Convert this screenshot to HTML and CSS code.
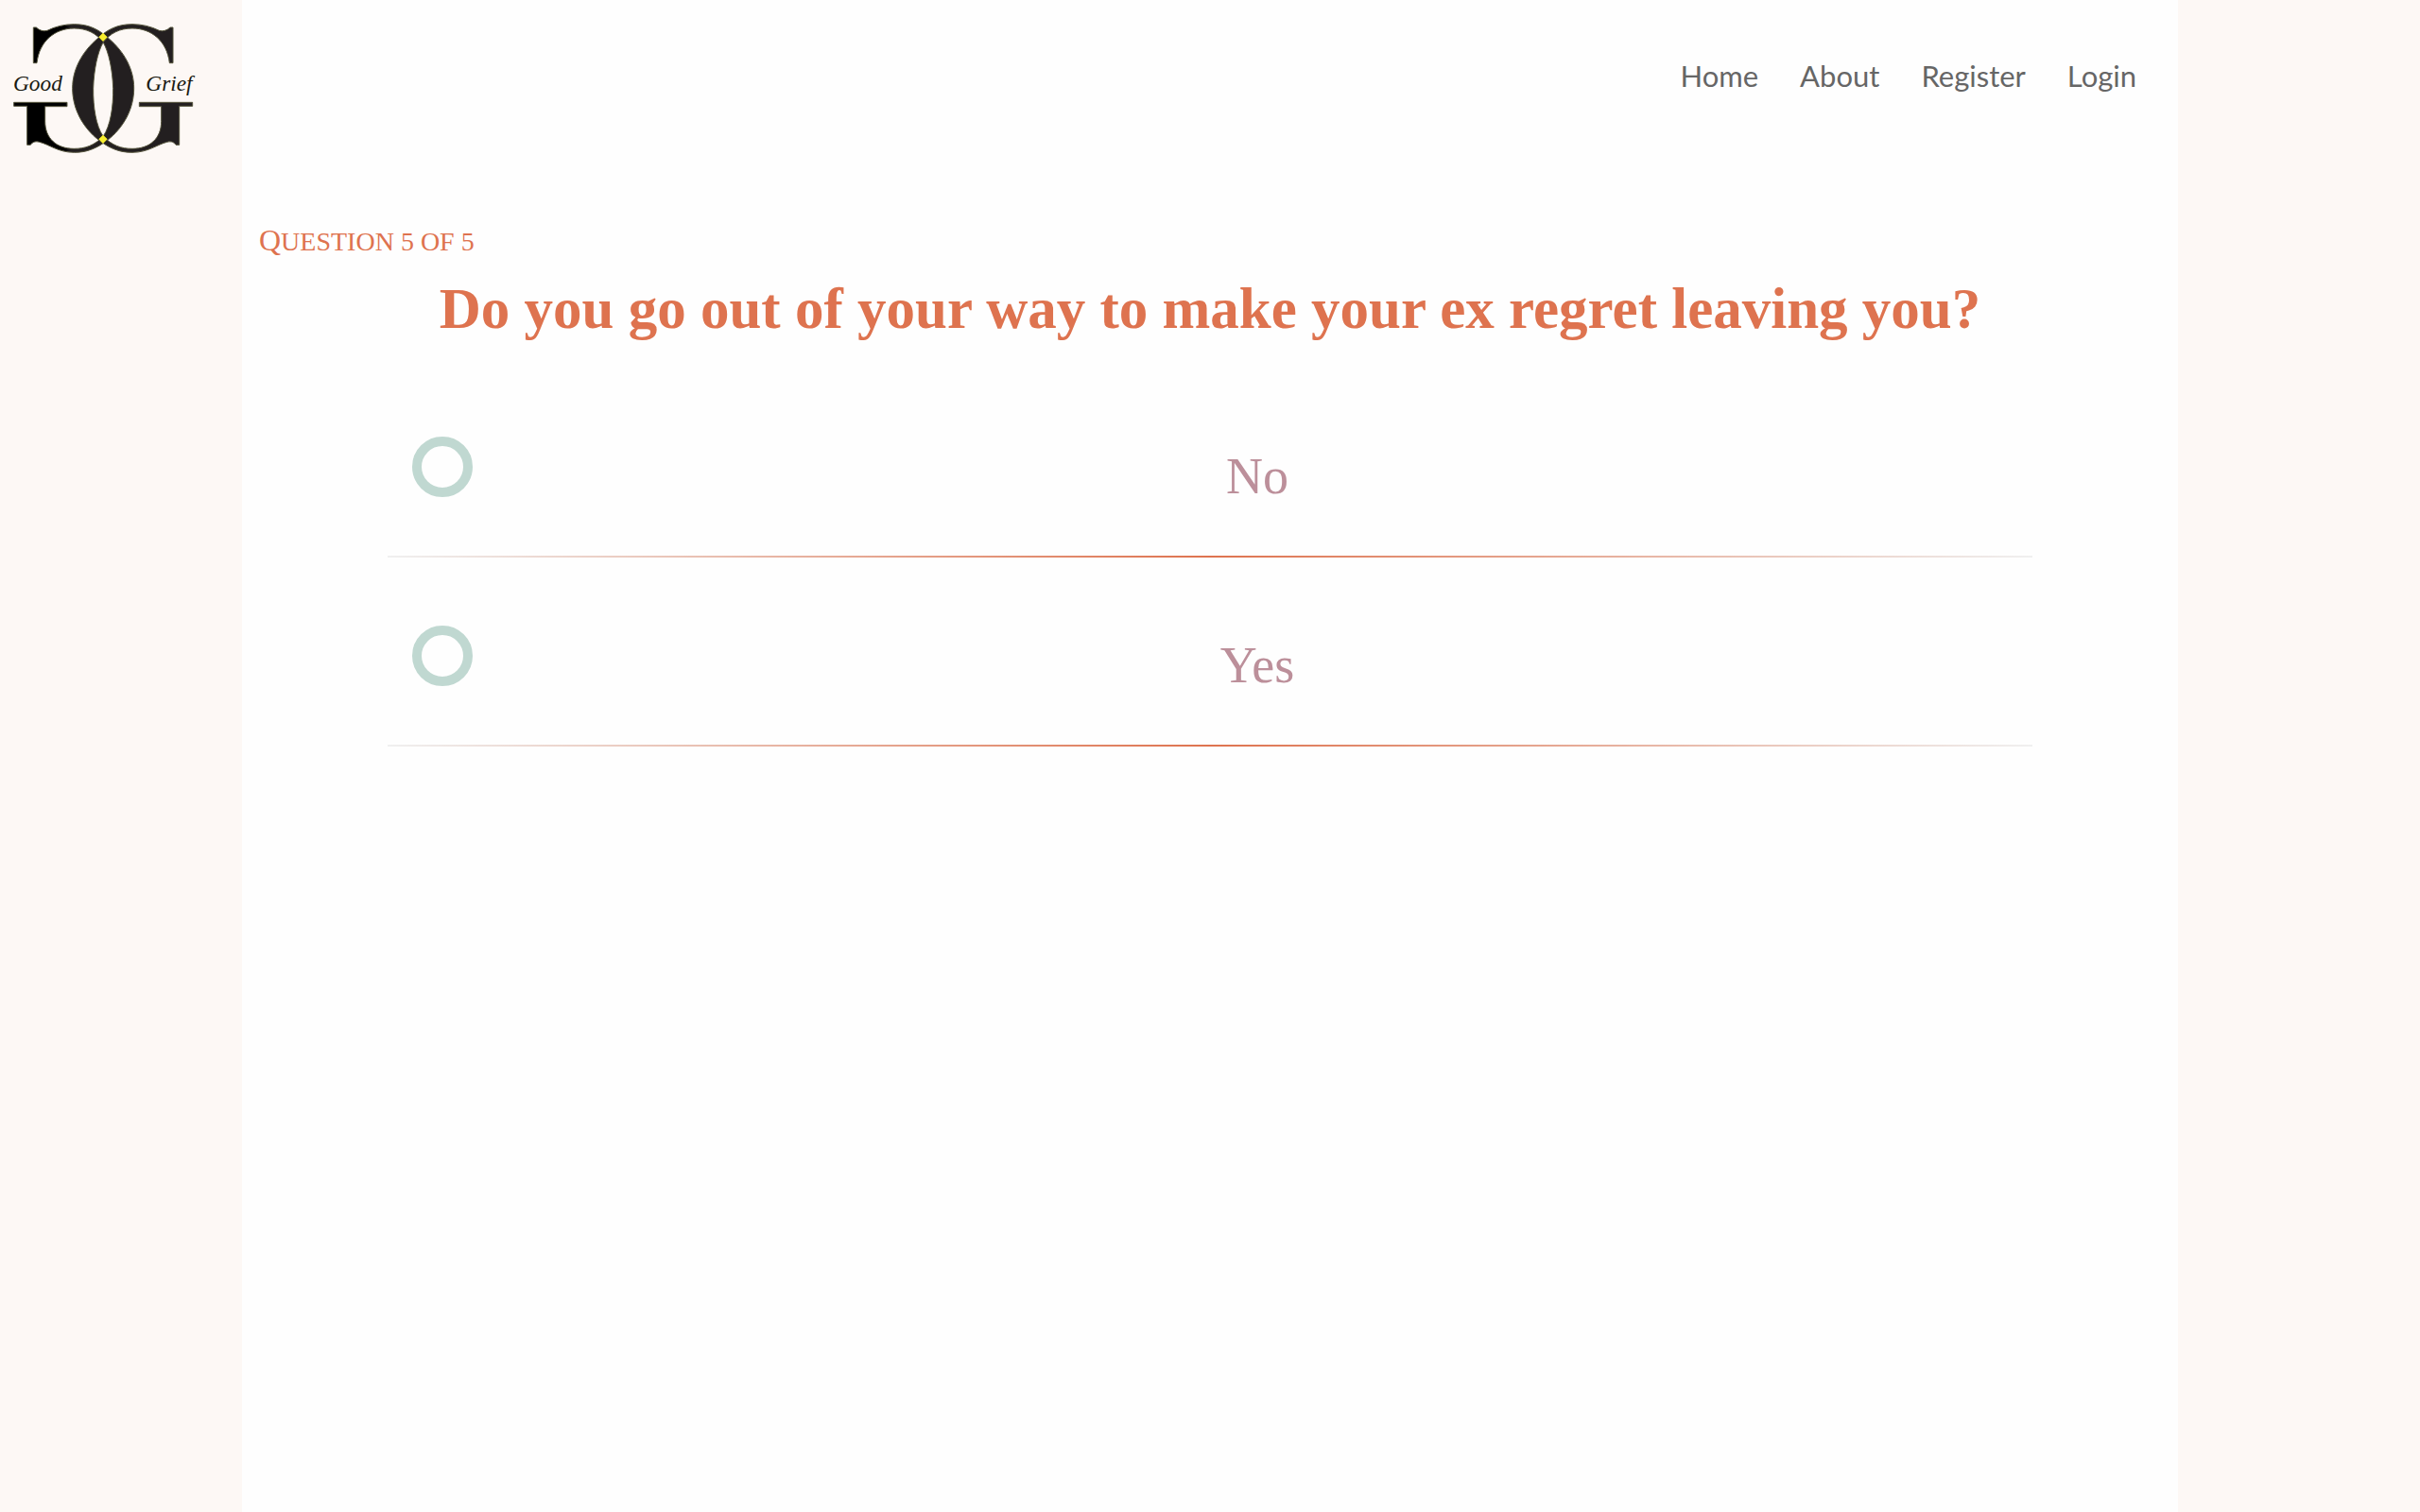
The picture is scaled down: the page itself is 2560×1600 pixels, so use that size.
FILE: index.html
```html
<!DOCTYPE html>
<html lang="en">
<head>
<meta charset="utf-8">
<title>Good Grief</title>
<link rel="stylesheet" href="styles.css">
</head>
<body>
<a class="brand" href="#" aria-label="Good Grief">
  <svg class="logo" viewBox="0 0 768 570" aria-hidden="true">
    <defs>
      <linearGradient id="ink" gradientUnits="userSpaceOnUse" x1="430" y1="0" x2="450" y2="0">
        <stop offset="0" stop-color="#231f20"/>
        <stop offset="1" stop-color="#000"/>
      </linearGradient>
      <path id="g" d="M549 87H540Q524 102 505 97Q465 77 420 77C370 77 340 95 310 122C260 165 230 220 230 280C230 345 262 405 315 446C350 472 380 484 420 484C470 484 500 458 530 451C545 447 552 452 558 460H569V337H611V325H442V338H512V385C512 440 475 472 420 472C385 472 355 462 327 432C305 400 295 340 296 280C298 220 310 165 327 135C350 105 380 90 420 90C480 90 530 130 538 200H549Z"/>
    </defs>
    <g stroke="#55543c" stroke-width="3">
      <use href="#g" fill="url(#ink)" transform="translate(655 0) scale(-1 1)"/>
      <use href="#g" fill="#231f20"/>
    </g>
    <path fill="#f7ee2e" d="M327 104L341 118L327 132L313 118ZM327 428L341 442L327 456L313 442Z"/>
    <text class="logo-word" x="42" y="287">Good</text>
    <text class="logo-word" x="463" y="287">Grief</text>
  </svg>
</a>
<div class="page">
  <nav class="nav">
    <a href="#">Home</a>
    <a href="#">About</a>
    <a href="#">Register</a>
    <a href="#">Login</a>
  </nav>
  <main>
    <p class="progress">Question 5 of 5</p>
    <form>
      <h1 class="question" id="question">Do you go out of your way to make your ex regret leaving you?</h1>
      <div class="answers" role="radiogroup" aria-labelledby="question">
        <div class="answer">
          <input type="radio" name="answer" id="no" value="no">
          <label for="no">No</label>
        </div>
        <div class="answer">
          <input type="radio" name="answer" id="yes" value="yes">
          <label for="yes">Yes</label>
        </div>
      </div>
    </form>
  </main>
</div>
</body>
</html>
```
FILE: styles.css
```css
* {
  box-sizing: border-box;
}

body {
  margin: 0;
  min-height: 100vh;
  display: grid;
  grid-template-columns: 10% 80% 10%;
  background: #fdf8f5;
  font-family: "Liberation Serif", serif;
}

.logo {
  display: block;
  width: 256px;
}

.logo-word {
  font: italic 70px "Liberation Serif", serif;
  fill: #1a1a12;
}

.page {
  background: #fefefe;
}

.nav {
  display: flex;
  justify-content: flex-end;
  gap: 44px;
  padding: 62px 44px 0 0;
  font: 31px/36px Lato, sans-serif;
}

.nav a {
  color: #666;
  text-decoration: none;
}

.progress {
  margin: 134px 0 0 18px;
  color: #de734f;
  font-size: 28px;
  line-height: 44px;
  text-transform: uppercase;
}

.progress::first-letter {
  font-size: 32px;
}

.question {
  margin: 13px 0 0;
  color: #de734f;
  font-size: 61px;
  line-height: 72px;
  text-align: center;
}

.answers {
  width: 85%;
  margin: 27px auto 0;
}

.answer {
  display: flex;
  align-items: flex-start;
  height: 200px;
  padding: 72px 0 0 26px;
  background: linear-gradient(to right, #f0f0f0, #de734f, #f0f0f0) bottom / 100% 2px no-repeat;
}

.answer input {
  appearance: none;
  flex: none;
  width: 64px;
  height: 64px;
  margin: 0 10px 0 0;
  border: 10px solid #c0d8d1;
  border-radius: 50%;
}

.answer input:checked {
  background: #de734f;
}

.answer label {
  flex: 1;
  padding-top: 10px;
  color: #bc8f9a;
  font-size: 54px;
  line-height: 64px;
  text-align: center;
}
```
